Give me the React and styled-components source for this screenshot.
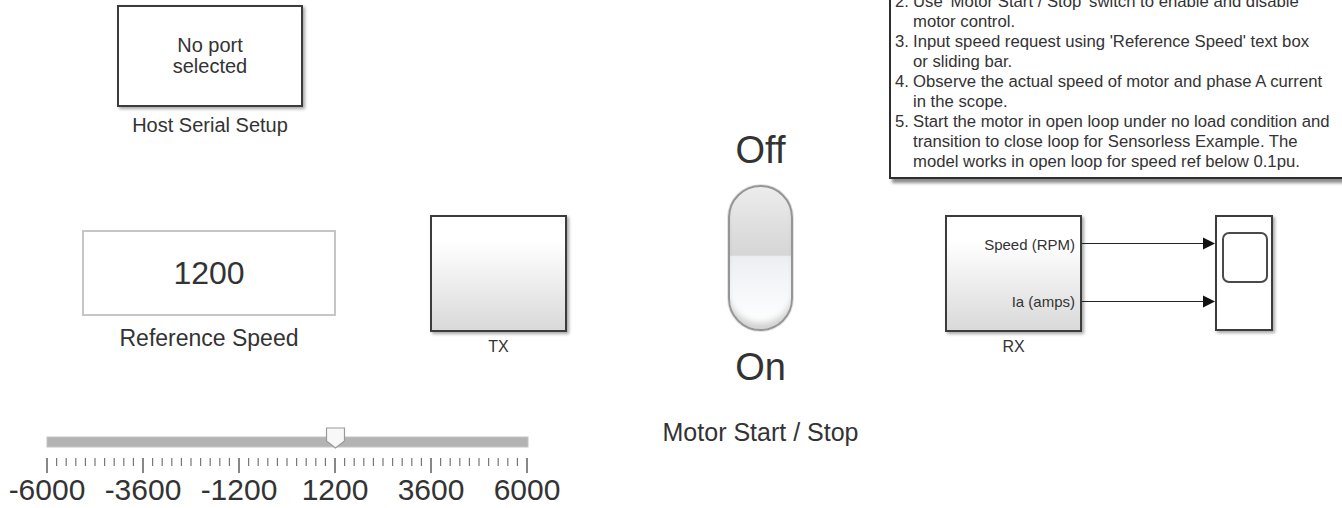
import React from 'react';
import styled, { createGlobalStyle } from 'styled-components';

const GlobalStyle = createGlobalStyle`
  html, body {
    margin: 0;
    padding: 0;
    background: #fff;
    overflow: hidden;
  }
  body {
    font-family: "Liberation Sans", Arial, sans-serif;
    color: #333;
  }
`;

// Simulink-style canvas: blocks sit at their model coordinates
const Canvas = styled.div`
  position: relative;
  width: 1342px;
  height: 508px;
  overflow: hidden;
  background: #fff;
`;

const Node = styled.div`
  position: absolute;
  left: ${p => p.$x}px;
  top: ${p => p.$y}px;
  width: ${p => p.$w}px;
  display: flex;
  flex-direction: column;
  align-items: center;
`;

const Block = styled.div`
  box-sizing: border-box;
  width: 100%;
  height: ${p => p.$h}px;
  border: 2px solid ${p => (p.$light ? '#c6c6c6' : '#3c3c3c')};
  background: ${p => (p.$shaded ? 'linear-gradient(#ffffff 22%, #d9d9d9 100%)' : '#fff')};
  box-shadow: ${p => (p.$light ? 'none' : '2px 2px 3px rgba(0, 0, 0, 0.35)')};
  display: flex;
  align-items: center;
  justify-content: center;
  text-align: center;
`;

const BlockText = styled.div`
  font-size: ${p => p.$size}px;
  line-height: ${p => p.$lh}px;
  color: #333;
`;

const BlockLabel = styled.div`
  margin-top: ${p => p.$gap}px;
  font-size: ${p => p.$size}px;
  line-height: ${p => p.$lh}px;
  color: #333;
  white-space: nowrap;
`;

/* ---------- slider ---------- */

const SliderWrap = styled.div`
  display: flex;
  flex-direction: column;
`;

const ScaleLabels = styled.div`
  display: flex;
  margin-top: -1px;
`;

const ScaleLabel = styled.div`
  width: 96px;
  text-align: center;
  font-size: 30px;
  line-height: 34px;
  color: #333;
  white-space: nowrap;
`;

/* ---------- switch ---------- */

const SwitchText = styled.div`
  margin-top: ${p => p.$gap}px;
  font-size: ${p => p.$size}px;
  line-height: ${p => p.$lh}px;
  color: #333;
  white-space: nowrap;
`;

const Toggle = styled.div`
  box-sizing: border-box;
  margin-top: 15px;
  width: 65px;
  height: 146px;
  border: 2px solid #959595;
  border-radius: 33px;
  background: linear-gradient(
    #ececec 0%,
    #dedede 30%,
    #d6d6d6 48%,
    #eceef2 49%,
    #f7f8fa 75%,
    #ffffff 100%
  );
  box-shadow: inset 0 -9px 6px -3px rgba(0, 0, 0, 0.18), 0 0 0 1px #e4e4e4;
`;

/* ---------- RX ---------- */

const Ports = styled.div`
  box-sizing: border-box;
  width: 100%;
  height: 100%;
  padding-right: 5px;
  display: flex;
  flex-direction: column;
  justify-content: space-around;
  align-items: flex-end;
`;

const PortLabel = styled.div`
  font-size: 15px;
  line-height: 18px;
  color: #333;
  white-space: nowrap;
`;

/* ---------- scope ---------- */

const ScopeBody = styled.div`
  box-sizing: border-box;
  width: 58px;
  height: 116px;
  border: 2px solid #3c3c3c;
  background: #fff;
  box-shadow: 2px 2px 3px rgba(0, 0, 0, 0.35);
  padding: 15px 0 0 5px;
`;

const ScopeScreen = styled.div`
  box-sizing: border-box;
  width: 46px;
  height: 51px;
  border: 2px solid #4a4a4a;
  border-radius: 7px;
  background: #fff;
`;

/* ---------- notes ---------- */

const NotesBox = styled.div`
  box-sizing: border-box;
  width: 470px;
  border: 2px solid #2e2e2e;
  background: #fff;
  box-shadow: 3px 4px 3px rgba(0, 0, 0, 0.45);
  padding: 10px 0 5px 4px;
`;

const NoteItem = styled.div`
  display: grid;
  grid-template-columns: 18px 1fr;
  font-size: 16.7px;
  line-height: 20px;
  color: #333;
`;

const NoteLine = styled.div`
  white-space: nowrap;
`;

const notes = [
  ['2.', ["Use 'Motor Start / Stop' switch to enable and disable", 'motor control.']],
  ['3.', ["Input speed request using 'Reference Speed' text box", 'or sliding bar.']],
  ['4.', ['Observe the actual speed of motor and phase A current', 'in the scope.']],
  [
    '5.',
    [
      'Start the motor in open loop under no load condition and',
      'transition to close loop for Sensorless Example. The',
      'model works in open loop for speed ref below 0.1pu.',
    ],
  ],
];

const scaleValues = ['-6000', '-3600', '-1200', '1200', '3600', '6000'];

const SliderScale = () => {
  const ticks = [];
  for (let i = 0; i <= 50; i++) {
    const x = 48 + i * 9.6;
    const major = i % 10 === 0;
    ticks.push(
      <line
        key={i}
        x1={x}
        x2={x}
        y1={36}
        y2={major ? 51 : 44}
        stroke={major ? '#555' : '#777'}
        strokeWidth={major ? 1.4 : 1.2}
      />
    );
  }
  return (
    <svg width="580" height="52">
      <rect x="48" y="15" width="481" height="10" fill="#b3b3b3" stroke="#c4c4c4" strokeWidth="1" />
      <polygon
        points="327.5,6 345.5,6 345.5,19 336.5,26 327.5,19"
        fill="#f8f8f8"
        stroke="#9a9a9a"
        strokeWidth="1.2"
      />
      {ticks}
    </svg>
  );
};

const Wires = () => (
  <svg width="133" height="117">
    <line x1="0" y1="28.5" x2="122" y2="28.5" stroke="#222" strokeWidth="1" />
    <polygon points="121,22.5 133,28.5 121,34.5" fill="#111" />
    <line x1="0" y1="86.5" x2="122" y2="86.5" stroke="#222" strokeWidth="1" />
    <polygon points="121,80.5 133,86.5 121,92.5" fill="#111" />
  </svg>
);

export default function App() {
  return (
    <>
      <GlobalStyle />
      <Canvas>
        {/* Host serial setup */}
        <Node $x={117} $y={5} $w={186}>
          <Block $h={102}>
            <BlockText $size={20} $lh={21}>
              No port
              <br />
              selected
            </BlockText>
          </Block>
          <BlockLabel $gap={7} $size={20} $lh={22}>
            Host Serial Setup
          </BlockLabel>
        </Node>

        {/* Reference speed edit box */}
        <Node $x={82} $y={230} $w={254}>
          <Block $h={86} $light>
            <BlockText $size={32} $lh={36}>
              1200
            </BlockText>
          </Block>
          <BlockLabel $gap={9} $size={23} $lh={26}>
            Reference Speed
          </BlockLabel>
        </Node>

        {/* Slider */}
        <Node $x={-1} $y={422} $w={580}>
          <SliderWrap>
            <SliderScale />
            <ScaleLabels>
              {scaleValues.map(v => (
                <ScaleLabel key={v}>{v}</ScaleLabel>
              ))}
            </ScaleLabels>
          </SliderWrap>
        </Node>

        {/* TX */}
        <Node $x={430} $y={215} $w={137}>
          <Block $h={117} $shaded />
          <BlockLabel $gap={6} $size={16} $lh={18}>
            TX
          </BlockLabel>
        </Node>

        {/* Motor start / stop switch */}
        <Node $x={700} $y={130} $w={121}>
          <SwitchText $gap={0} $size={38} $lh={40}>
            Off
          </SwitchText>
          <Toggle />
          <SwitchText $gap={16} $size={38} $lh={40}>
            On
          </SwitchText>
          <SwitchText $gap={31} $size={25} $lh={28}>
            Motor Start / Stop
          </SwitchText>
        </Node>

        {/* RX */}
        <Node $x={945} $y={215} $w={137}>
          <Block $h={117} $shaded>
            <Ports>
              <PortLabel>Speed (RPM)</PortLabel>
              <PortLabel>Ia (amps)</PortLabel>
            </Ports>
          </Block>
          <BlockLabel $gap={6} $size={16} $lh={18}>
            RX
          </BlockLabel>
        </Node>

        {/* signal lines */}
        <Node $x={1082} $y={215} $w={133}>
          <Wires />
        </Node>

        {/* Scope */}
        <Node $x={1215} $y={215} $w={58}>
          <ScopeBody>
            <ScopeScreen />
          </ScopeBody>
        </Node>

        {/* Instructions annotation */}
        <Node $x={889} $y={-20} $w={470}>
          <NotesBox>
            {notes.map(([num, lines]) => (
              <NoteItem key={num}>
                <div>{num}</div>
                <div>
                  {lines.map(l => (
                    <NoteLine key={l}>{l}</NoteLine>
                  ))}
                </div>
              </NoteItem>
            ))}
          </NotesBox>
        </Node>
      </Canvas>
    </>
  );
}
